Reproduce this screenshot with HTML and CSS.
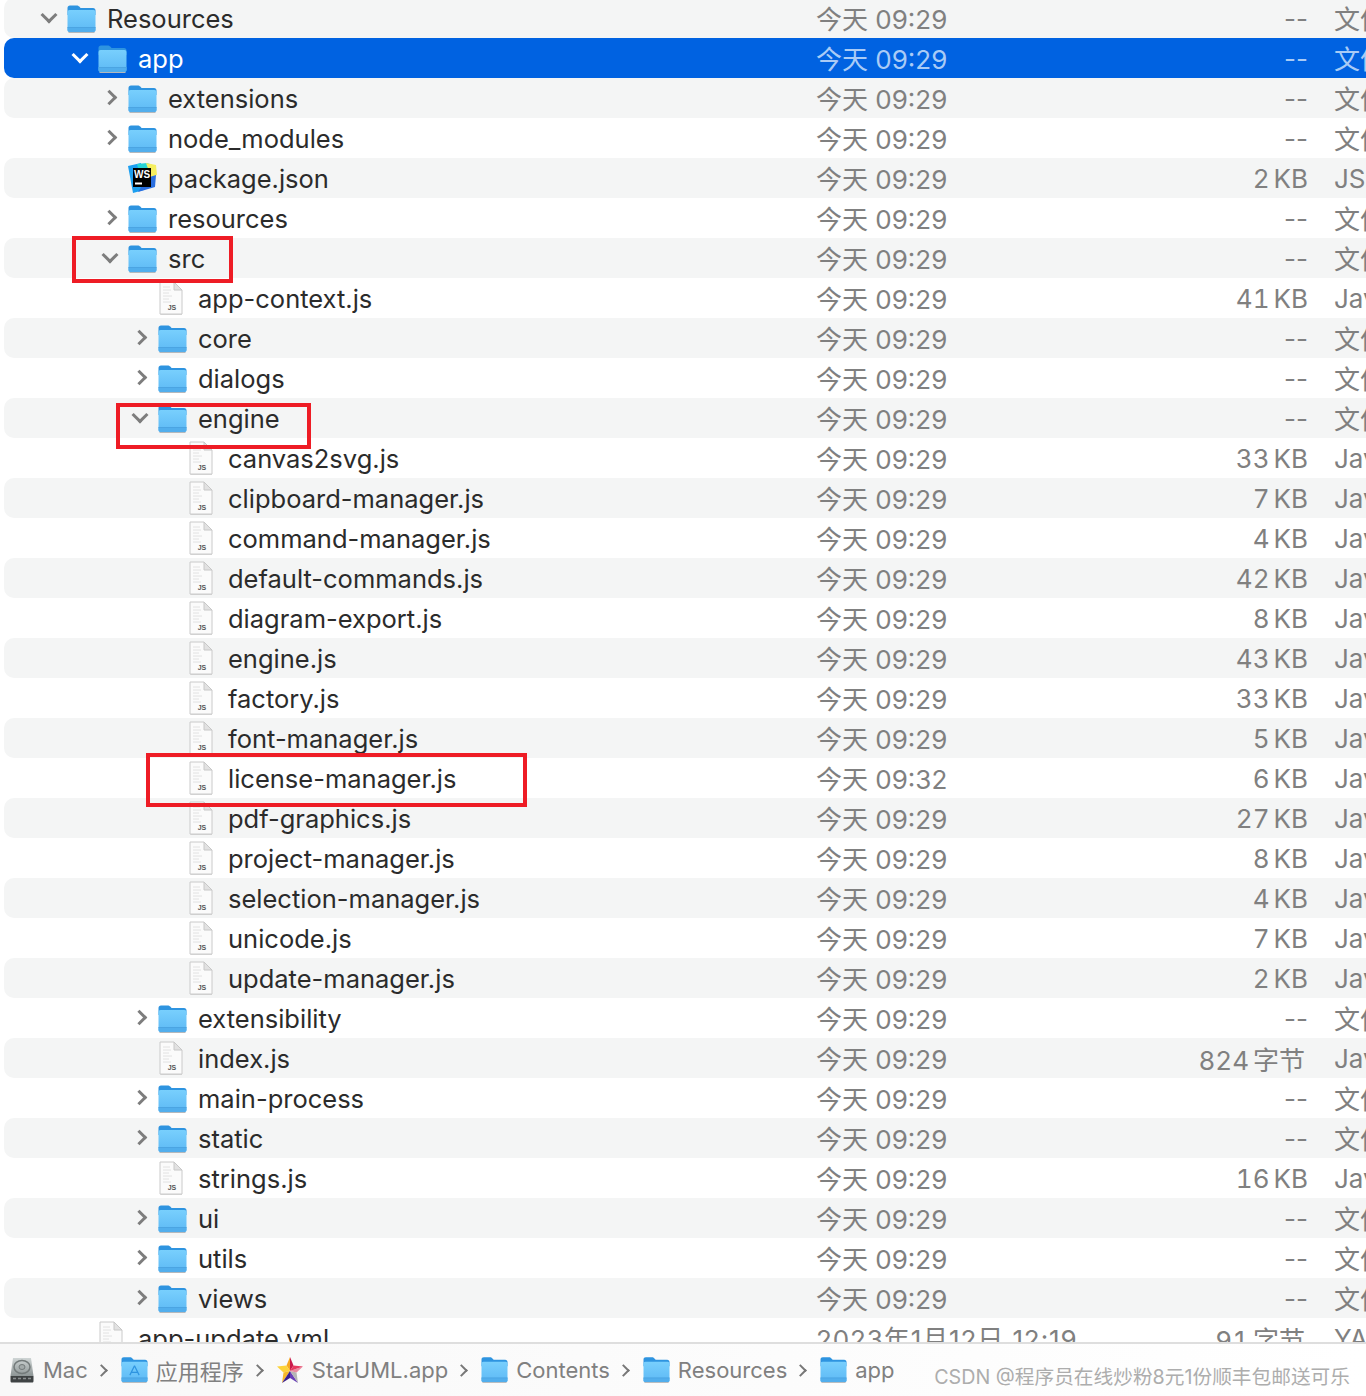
FILE: index.html
```html
<!DOCTYPE html>
<html>
<head lang="zh">
    <meta charset="UTF-8">
    <title>app</title>
    <link rel="stylesheet" href="styles.css">
</head>
<body>
<svg class="defs" width="0" height="0">
    <defs>
        <linearGradient id="folderBody" x1="0" y1="0" x2="0" y2="1">
            <stop offset="0" stop-color="#78cffd"/>
            <stop offset="1" stop-color="#5db9f5"/>
        </linearGradient>
        <linearGradient id="diskBody" x1="0" y1="0" x2="0" y2="1">
            <stop offset="0" stop-color="#cfd5d5"/>
            <stop offset="1" stop-color="#8d9595"/>
        </linearGradient>
        <symbol id="folder" viewBox="0 0 29 28">
            <path d="M.5 3C.5 1.200 1.500 .4 3 .4h6.600c1.200 0 1.900.4 2.700 1.200L13.600 3H26c1.600 0 2.500 1 2.500 2.500V10H.5z" fill="#2e94e0"/>
            <rect x="0.500" y="5" width="28" height="22" rx="2" fill="url(#folderBody)"/>
            <path d="M.5 22.500h28V25c0 1.300-.9 2-2 2h-24c-1.100 0-2-.7-2-2z" fill="#52aeec"/>
            <rect x="0.500" y="22" width="28" height="1" fill="#4ba4e2"/>
            <rect x="1.500" y="27" width="26" height="1" fill="#b4b8bc"/>
        </symbol>
        <symbol id="file" viewBox="0 0 26 34">
            <path d="M2.500 1.500h13.500l8 8V34H2.500z" fill="#c0c0c0" opacity=".6"/>
            <path d="M2 1h14l8 8v24H2z" fill="#fbfbfb" stroke="#cacaca"/>
            <path d="M16 1v8h8z" fill="#e2e2e2" stroke="#c8c8c8"/>
            <path d="M5 6h7M5 9h8M5 12h6M5 15h9M5 18h6M5 21h8" stroke="#e2e2e2"/>
            <text x="14" y="29" class="file_tag">JS</text>
        </symbol>
    </defs>
</svg>

<div class="window">
    <div class="tree">
        <div class="row depth0"><i class="twisty open"></i><svg class="icon"><use href="#folder"/></svg><span class="name">Resources</span><span class="date">今天 09:29</span><span class="size blank">--</span><span class="kind">文件夹</span></div>
        <div class="row depth1 selected"><i class="twisty open"></i><svg class="icon"><use href="#folder"/></svg><span class="name">app</span><span class="date">今天 09:29</span><span class="size blank">--</span><span class="kind">文件夹</span></div>
        <div class="row depth2"><i class="twisty"></i><svg class="icon"><use href="#folder"/></svg><span class="name">extensions</span><span class="date">今天 09:29</span><span class="size blank">--</span><span class="kind">文件夹</span></div>
        <div class="row depth2"><i class="twisty"></i><svg class="icon"><use href="#folder"/></svg><span class="name">node_modules</span><span class="date">今天 09:29</span><span class="size blank">--</span><span class="kind">文件夹</span></div>
        <div class="row depth2">
            <svg class="icon ws" viewBox="0 0 29 30">
                <path d="M0 3l13-3 3 27-11 3z" fill="#1c9ff0"/>
                <path d="M9 1l10-1 8 3-2 12-12 2z" fill="#27d3d6"/>
                <path d="M18 0l10 2 1 10-6 2z" fill="#f5ee60"/>
                <path d="M10 29l17-5 1-12-9 3z" fill="#2a6fe0"/>
                <rect x="5" y="5" width="18" height="19" fill="#000"/>
                <text x="14" y="15" class="ws_tag">WS</text>
                <rect x="7" y="19.500" width="7" height="2" fill="#fff"/>
            </svg>
            <span class="name">package.json</span><span class="date">今天 09:29</span><span class="size">2 KB</span><span class="kind">JSON</span>
        </div>
        <div class="row depth2"><i class="twisty"></i><svg class="icon"><use href="#folder"/></svg><span class="name">resources</span><span class="date">今天 09:29</span><span class="size blank">--</span><span class="kind">文件夹</span></div>
        <div class="row depth2"><b class="mark mark_src"></b><i class="twisty open"></i><svg class="icon"><use href="#folder"/></svg><span class="name">src</span><span class="date">今天 09:29</span><span class="size blank">--</span><span class="kind">文件夹</span></div>
        <div class="row depth3"><svg class="icon file"><use href="#file"/></svg><span class="name">app-context.js</span><span class="date">今天 09:29</span><span class="size">41 KB</span><span class="kind">JavaScript</span></div>
        <div class="row depth3"><i class="twisty"></i><svg class="icon"><use href="#folder"/></svg><span class="name">core</span><span class="date">今天 09:29</span><span class="size blank">--</span><span class="kind">文件夹</span></div>
        <div class="row depth3"><i class="twisty"></i><svg class="icon"><use href="#folder"/></svg><span class="name">dialogs</span><span class="date">今天 09:29</span><span class="size blank">--</span><span class="kind">文件夹</span></div>
        <div class="row depth3"><b class="mark mark_engine"></b><i class="twisty open"></i><svg class="icon"><use href="#folder"/></svg><span class="name">engine</span><span class="date">今天 09:29</span><span class="size blank">--</span><span class="kind">文件夹</span></div>
        <div class="row depth4"><svg class="icon file"><use href="#file"/></svg><span class="name">canvas2svg.js</span><span class="date">今天 09:29</span><span class="size">33 KB</span><span class="kind">JavaScript</span></div>
        <div class="row depth4"><svg class="icon file"><use href="#file"/></svg><span class="name">clipboard-manager.js</span><span class="date">今天 09:29</span><span class="size">7 KB</span><span class="kind">JavaScript</span></div>
        <div class="row depth4"><svg class="icon file"><use href="#file"/></svg><span class="name">command-manager.js</span><span class="date">今天 09:29</span><span class="size">4 KB</span><span class="kind">JavaScript</span></div>
        <div class="row depth4"><svg class="icon file"><use href="#file"/></svg><span class="name">default-commands.js</span><span class="date">今天 09:29</span><span class="size">42 KB</span><span class="kind">JavaScript</span></div>
        <div class="row depth4"><svg class="icon file"><use href="#file"/></svg><span class="name">diagram-export.js</span><span class="date">今天 09:29</span><span class="size">8 KB</span><span class="kind">JavaScript</span></div>
        <div class="row depth4"><svg class="icon file"><use href="#file"/></svg><span class="name">engine.js</span><span class="date">今天 09:29</span><span class="size">43 KB</span><span class="kind">JavaScript</span></div>
        <div class="row depth4"><svg class="icon file"><use href="#file"/></svg><span class="name">factory.js</span><span class="date">今天 09:29</span><span class="size">33 KB</span><span class="kind">JavaScript</span></div>
        <div class="row depth4"><svg class="icon file"><use href="#file"/></svg><span class="name">font-manager.js</span><span class="date">今天 09:29</span><span class="size">5 KB</span><span class="kind">JavaScript</span></div>
        <div class="row depth4"><b class="mark mark_license"></b><svg class="icon file"><use href="#file"/></svg><span class="name">license-manager.js</span><span class="date">今天 09:32</span><span class="size">6 KB</span><span class="kind">JavaScript</span></div>
        <div class="row depth4"><svg class="icon file"><use href="#file"/></svg><span class="name">pdf-graphics.js</span><span class="date">今天 09:29</span><span class="size">27 KB</span><span class="kind">JavaScript</span></div>
        <div class="row depth4"><svg class="icon file"><use href="#file"/></svg><span class="name">project-manager.js</span><span class="date">今天 09:29</span><span class="size">8 KB</span><span class="kind">JavaScript</span></div>
        <div class="row depth4"><svg class="icon file"><use href="#file"/></svg><span class="name">selection-manager.js</span><span class="date">今天 09:29</span><span class="size">4 KB</span><span class="kind">JavaScript</span></div>
        <div class="row depth4"><svg class="icon file"><use href="#file"/></svg><span class="name">unicode.js</span><span class="date">今天 09:29</span><span class="size">7 KB</span><span class="kind">JavaScript</span></div>
        <div class="row depth4"><svg class="icon file"><use href="#file"/></svg><span class="name">update-manager.js</span><span class="date">今天 09:29</span><span class="size">2 KB</span><span class="kind">JavaScript</span></div>
        <div class="row depth3"><i class="twisty"></i><svg class="icon"><use href="#folder"/></svg><span class="name">extensibility</span><span class="date">今天 09:29</span><span class="size blank">--</span><span class="kind">文件夹</span></div>
        <div class="row depth3"><svg class="icon file"><use href="#file"/></svg><span class="name">index.js</span><span class="date">今天 09:29</span><span class="size bytes">824 字节</span><span class="kind">JavaScript</span></div>
        <div class="row depth3"><i class="twisty"></i><svg class="icon"><use href="#folder"/></svg><span class="name">main-process</span><span class="date">今天 09:29</span><span class="size blank">--</span><span class="kind">文件夹</span></div>
        <div class="row depth3"><i class="twisty"></i><svg class="icon"><use href="#folder"/></svg><span class="name">static</span><span class="date">今天 09:29</span><span class="size blank">--</span><span class="kind">文件夹</span></div>
        <div class="row depth3"><svg class="icon file"><use href="#file"/></svg><span class="name">strings.js</span><span class="date">今天 09:29</span><span class="size">16 KB</span><span class="kind">JavaScript</span></div>
        <div class="row depth3"><i class="twisty"></i><svg class="icon"><use href="#folder"/></svg><span class="name">ui</span><span class="date">今天 09:29</span><span class="size blank">--</span><span class="kind">文件夹</span></div>
        <div class="row depth3"><i class="twisty"></i><svg class="icon"><use href="#folder"/></svg><span class="name">utils</span><span class="date">今天 09:29</span><span class="size blank">--</span><span class="kind">文件夹</span></div>
        <div class="row depth3"><i class="twisty"></i><svg class="icon"><use href="#folder"/></svg><span class="name">views</span><span class="date">今天 09:29</span><span class="size blank">--</span><span class="kind">文件夹</span></div>
        <div class="row depth1"><svg class="icon file"><use href="#file"/></svg><span class="name">app-update.yml</span><span class="date date_long">2023年1月12日 12:19</span><span class="size bytes">91 字节</span><span class="kind">YAML</span></div>
    </div>

    <div class="pathbar">
        <svg class="crumb_icon disk" viewBox="0 0 26 26">
            <path d="M4 1h18l2.500 18h-23z" fill="url(#diskBody)"/>
            <path d="M1.500 19h23v5c0 1-.6 1.500-1.500 1.500H3c-.9 0-1.500-.5-1.500-1.500z" fill="#3f4344"/>
            <path d="M4 21.500h3M9 21.500h3M14 21.500h3M19 21.500h3" stroke="#8b8f90" stroke-width="1.500"/>
            <ellipse cx="13" cy="10" rx="8" ry="6.500" fill="none" stroke="#737a7a" stroke-width="1.500"/>
            <ellipse cx="13" cy="10" rx="3" ry="2.500" fill="#a3aaaa" stroke="#737a7a"/>
        </svg>
        <span class="crumb">Mac</span><span class="sep"></span>
        <svg class="crumb_icon" viewBox="0 0 29 28">
            <use href="#folder" width="29" height="28"/>
            <path d="M14.500 9.500l-5 10M14.500 9.500l5 10M10.500 16.500h8" stroke="#2e94e0" stroke-width="1.300" fill="none"/>
        </svg>
        <span class="crumb">应用程序</span><span class="sep"></span>
        <svg class="crumb_icon star" viewBox="0 0 26 26">
            <path d="M13 0L9.500 8.500 13 14z" fill="#f7a823"/>
            <path d="M0 9.500l9.500-1L13 14l-6.500 1.500z" fill="#fdd33a"/>
            <path d="M6.500 15.500L13 14 5 26z" fill="#f6b92a"/>
            <path d="M5 26l8-12v7z" fill="#3a1f8f"/>
            <path d="M13 14v7l8 5z" fill="#6a3fb8"/>
            <path d="M13 14l6.500 1.500L21 26z" fill="#b5b5b5"/>
            <path d="M13 14l13-4.500-6.500 6z" fill="#e98aa0"/>
            <path d="M13 0l3.500 8.500L13 14z" fill="#c9194b"/>
            <path d="M16.500 8.500l9.500 1L13 14z" fill="#e63a5f"/>
        </svg>
        <span class="crumb">StarUML.app</span><span class="sep"></span>
        <svg class="crumb_icon"><use href="#folder"/></svg>
        <span class="crumb">Contents</span><span class="sep"></span>
        <svg class="crumb_icon"><use href="#folder"/></svg>
        <span class="crumb">Resources</span><span class="sep"></span>
        <svg class="crumb_icon"><use href="#folder"/></svg>
        <span class="crumb">app</span>
        <span class="watermark">CSDN @程序员在线炒粉8元1份顺丰包邮送可乐</span>
    </div>
</div>
</body>
</html>
```

FILE: styles.css
```css
* {
    margin: 0;
    padding: 0;
    box-sizing: border-box;
}
body {
    background: #fff;
    font-family: Inter, "Noto Sans CJK SC", sans-serif;
    overflow: hidden;
}
.defs {
    display: block;
    height: 0;
}
.window {
    display: flex;
    flex-direction: column;
    height: 1396px;
    overflow: hidden;
}
.tree {
    flex: 1;
    min-height: 0;
    overflow: hidden;
    padding: 0 0 0 4px;
    margin-top: -2px;
}

/* rows */
.row {
    position: relative;
    display: flex;
    align-items: center;
    height: 40px;
    border-radius: 10px 0 0 10px;
    font-size: 26px;
    color: #2b2b2b;
    white-space: nowrap;
}
.row:nth-child(odd) {
    background: #f4f5f5;
}
.row.selected {
    background: #0062e1;
    color: #fff;
}
.depth0 { padding-left: 63px; }
.depth1 { padding-left: 94px; }
.depth2 { padding-left: 124px; }
.depth3 { padding-left: 154px; }
.depth4 { padding-left: 184px; }

.twisty {
    position: absolute;
    width: 11px;
    height: 11px;
    margin-left: -24px;
    margin-top: -1px;
    border-right: 3px solid #7d7d7d;
    border-bottom: 3px solid #7d7d7d;
    transform: rotate(-45deg);
}
.twisty.open {
    width: 12px;
    height: 12px;
    margin-left: -24px;
    margin-top: -7px;
    transform: rotate(45deg);
}
.selected .twisty {
    border-color: #fff;
}
.icon {
    flex: none;
    width: 29px;
    height: 28px;
    margin-top: 2px;
    margin-right: 11px;
}
.icon.file {
    width: 26px;
    height: 34px;
    margin-top: 0;
    margin-right: 14px;
}
.icon.ws {
    height: 30px;
    margin-top: 0;
}
.file_tag {
    font: bold 7px "Liberation Sans", sans-serif;
    fill: #555;
    text-anchor: middle;
}
.ws_tag {
    font: bold 10px "Liberation Sans", sans-serif;
    fill: #fff;
    text-anchor: middle;
}

.name {
    flex: none;
    font-size: 25.5px;
}
.date {
    position: absolute;
    left: 812px;
    margin-top: -2px;
    color: #808080;
    font-size: 26px;
}
.date_long {
    letter-spacing: 0.9px;
}
.size {
    position: absolute;
    right: 58px;
    color: #808080;
    font-variant-numeric: tabular-nums;
    word-spacing: -3px;
}
.size.blank {
    font-variant-numeric: normal;
}
.size.bytes {
    right: 61px;
}
.kind {
    position: absolute;
    left: 1330px;
    color: #808080;
}
/* folders have a chinese kind, that font sits a bit lower */
.blank + .kind {
    margin-top: -2px;
}
.selected .date,
.selected .size,
.selected .kind {
    color: #a9cbf6;
}

/* red marks drawn on top of the screenshot */
.mark {
    position: absolute;
    border: 4px solid #ee1c25;
    z-index: 2;
}
.mark_src {
    left: 68px;
    top: -2px;
    width: 161px;
    height: 47px;
}
.mark_engine {
    left: 112px;
    top: 5px;
    width: 195px;
    height: 46px;
}
.mark_license {
    left: 142px;
    top: -5px;
    width: 381px;
    height: 54px;
}

/* path bar */
.pathbar {
    flex: none;
    display: flex;
    align-items: center;
    height: 54px;
    padding: 0 16px 0 9px;
    background: linear-gradient(90deg, #f8f8f8, #fff);
    border-top: 2px solid #dedede;
    font-size: 22px;
    color: #808080;
    white-space: nowrap;
}
.crumb_icon {
    flex: none;
    width: 27px;
    height: 26px;
    margin-right: 8px;
}
.crumb_icon.disk {
    width: 26px;
    height: 26px;
    margin-right: 8px;
}
.crumb_icon.star {
    width: 26px;
    height: 26px;
    margin-right: 9px;
}
.sep {
    width: 9px;
    height: 9px;
    margin: 0 15px 0 9px;
    border-right: 2px solid #777;
    border-top: 2px solid #777;
    transform: rotate(45deg);
}
.watermark {
    margin-left: auto;
    margin-top: 10px;
    font-size: 19.700px;
    color: #adadad;
}
```
